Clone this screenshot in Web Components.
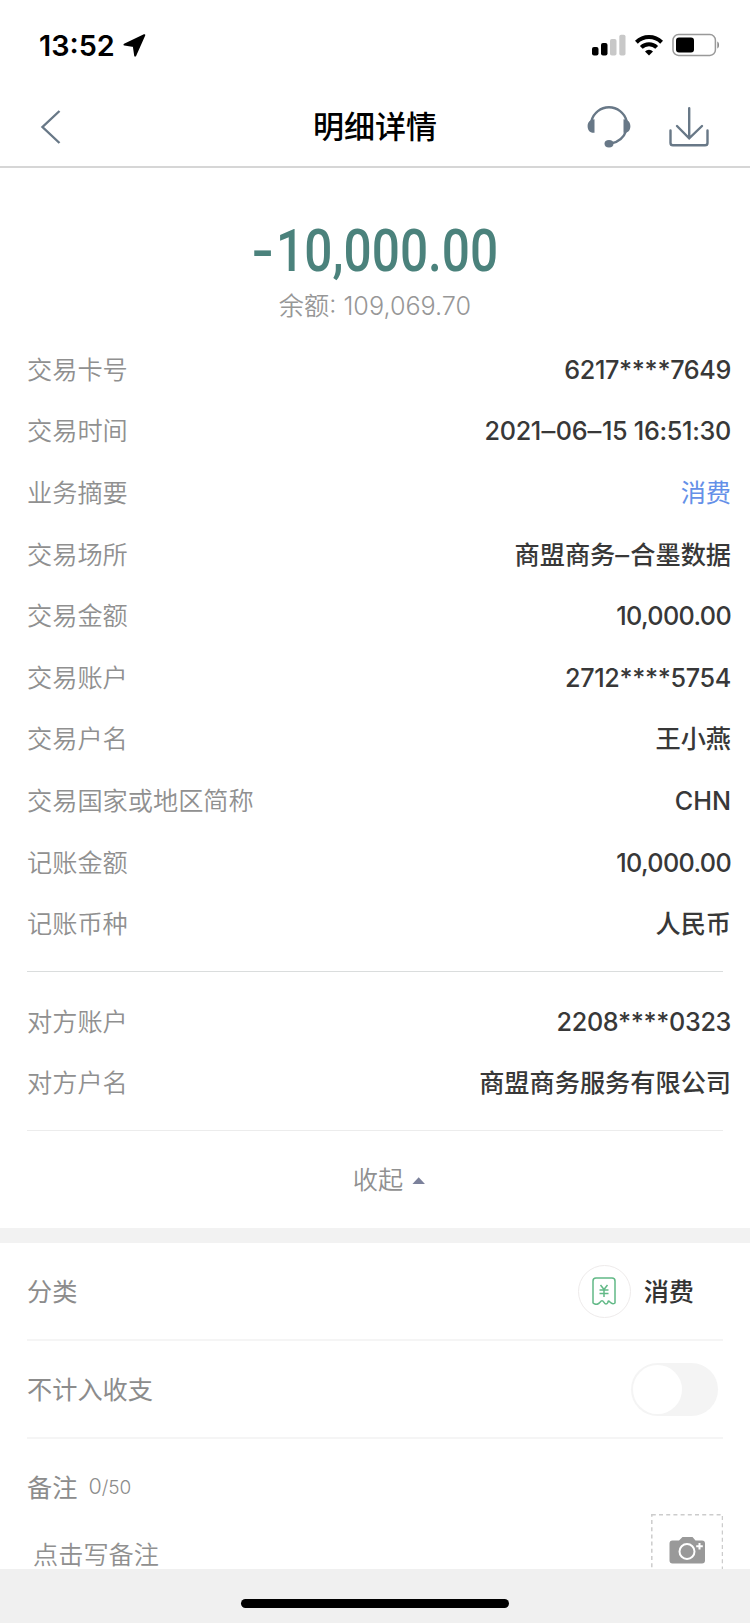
<!DOCTYPE html>
<html lang="zh-CN">
<head>
<meta charset="utf-8">
<title>明细详情</title>
<style>
  body {
    margin: 0;
    background: #fff;
    font-family: Inter, "Noto Sans CJK SC", sans-serif;
  }
  /* wide dashes in dates and names */
  detail-row span {
    display: inline-block;
    margin: 0 1.2px;
    transform: scaleX(1.1);
  }
  amount-summary span {
    display: inline-block;
    margin-right: 6px;
    transform: scaleX(1.3);
  }
</style>
</head>
<body>
<detail-page>
  <status-bar slot="top" time="13:52"></status-bar>
  <nav-bar slot="top">明细详情</nav-bar>

  <amount-summary balance="109,069.70"><span>-</span>10,000.00</amount-summary>

  <detail-group>
    <detail-row label="交易卡号" kind="account">6217****7649</detail-row>
    <detail-row label="交易时间" kind="time">2021<span>–</span>06<span>–</span>15 16:51:30</detail-row>
    <detail-row label="业务摘要" link>消费</detail-row>
    <detail-row label="交易场所">商盟商务<span>–</span>合墨数据</detail-row>
    <detail-row label="交易金额" kind="money">10,000.00</detail-row>
    <detail-row label="交易账户" kind="account">2712****5754</detail-row>
    <detail-row label="交易户名">王小燕</detail-row>
    <detail-row label="交易国家或地区简称">CHN</detail-row>
    <detail-row label="记账金额" kind="money">10,000.00</detail-row>
    <detail-row label="记账币种">人民币</detail-row>
  </detail-group>
  <detail-group class="peer">
    <detail-row label="对方账户" kind="account">2208****0323</detail-row>
    <detail-row label="对方户名">商盟商务服务有限公司</detail-row>
  </detail-group>
  <fold-button>收起</fold-button>

  <setting-row label="分类"><category-tag>消费</category-tag></setting-row>
  <setting-row label="不计入收支"><toggle-switch></toggle-switch></setting-row>
  <note-box label="备注" count="0" max="50">点击写备注</note-box>

  <home-bar slot="bottom"></home-bar>
</detail-page>

<script>
// attach an open shadow root filled from a template
function render(el, html) {
  const template = document.createElement("template");
  template.innerHTML = html;
  el.attachShadow({ mode: "open" });
  el.shadowRoot.appendChild(template.content.cloneNode(true));
}

// page frame: fixed height, the content is cut off by the home bar
class DetailPage extends HTMLElement {
  constructor() {
    super();
    render(this, `
      <style>
        :host { display: flex; flex-direction: column; width: 750px; height: 1623px; overflow: hidden; }
        main { flex: 1; min-height: 0; overflow: hidden; }
        ::slotted(.peer) { --pad-top: 19px; --line: #ececec; --pad-bottom: 16px; }
      </style>
      <slot name="top"></slot>
      <main><slot></slot></main>
      <slot name="bottom"></slot>`);
  }
}
customElements.define("detail-page", DetailPage);

class StatusBar extends HTMLElement {
  constructor() {
    super();
    render(this, `
      <style>
        :host { display: flex; align-items: center; justify-content: space-between;
          box-sizing: border-box; flex: none; height: 88px; padding: 2px 30px 0 39px; color: #000; }
        .left, .right { display: flex; align-items: center; }
        .left { gap: 8px; font-size: 28.8px; font-weight: 600; }
        .right { gap: 9px; }
        svg { display: block; }
      </style>
      <div class="left">
        <span></span>
        <svg width="23" height="23" viewBox="0 0 23 23">
          <path d="M21.3 1.2 1.5 10.6 10.8 12 12.2 21.5Z" stroke="#000" stroke-width="2" stroke-linejoin="round"/>
        </svg>
      </div>
      <div class="right">
        <svg width="34" height="22" viewBox="0 0 34 22">
          <rect x="0" y="13" width="6.5" height="8.5" rx="2"/>
          <rect x="9" y="9" width="6.5" height="12.5" rx="2"/>
          <rect x="18" y="5" width="6.5" height="16.5" rx="1.8" fill="#c8c8c8"/>
          <rect x="27.3" y="0.7" width="6.2" height="20.8" rx="1.8" fill="#c8c8c8"/>
        </svg>
        <svg width="28" height="22" viewBox="0 0 28 22" fill="none" stroke="#000" stroke-width="4">
          <path d="M1.4 8.2A18 18 0 0 1 26.6 8.2"/>
          <path d="M6.3 13.4A11 11 0 0 1 21.7 13.4"/>
          <path d="M14 21.4 10 17.4A5.7 5.7 0 0 1 18 17.4Z" fill="#000" stroke="none"/>
        </svg>
        <svg width="48" height="24" viewBox="0 0 48 24">
          <rect x="1" y="1.6" width="42.4" height="20.8" rx="5.5" fill="none" stroke="#999" stroke-width="1.5"/>
          <rect x="4" y="4.6" width="18" height="14.8" rx="3"/>
          <path d="M45.3 8.5C47.6 9.3 47.6 14.7 45.3 15.5Z" fill="#888"/>
        </svg>
      </div>`);
    this.shadowRoot.querySelector("span").textContent = this.getAttribute("time");
  }
}
customElements.define("status-bar", StatusBar);

class NavBar extends HTMLElement {
  constructor() {
    super();
    render(this, `
      <style>
        :host { display: grid; grid-template-columns: 1fr auto 1fr; align-items: center; flex: none;
          box-sizing: border-box; height: 80px; padding: 0 40px 1px; border-bottom: 2px solid #d6d6d6; }
        h1 { margin: 1px 0 0; font-size: 31px; font-weight: 500; color: #000; line-height: 40px; }
        .actions { display: flex; justify-content: flex-end; gap: 38px; margin-right: 1px; }
        svg { display: block; fill: none; stroke: #687887; stroke-width: 2.4; stroke-linecap: round; }
      </style>
      <svg width="22" height="36" viewBox="0 0 22 36"><path d="M19.5 2 2.5 18 19.5 34" stroke-linecap="butt"/></svg>
      <h1><slot></slot></h1>
      <div class="actions">
        <svg width="44" height="44" viewBox="0 1.2 44 44">
          <path d="M4.5 17A18 17.6 0 0 1 39.5 17M39.3 26.5C37 33.5 31.5 38.5 23 40"/>
          <path d="M7.5 15.500V29C3 29.500 .6 26.500 .6 22.500S3 15.700 7.500 15.500ZM36.500 15.500V29C41 29.500 43.400 26.500 43.400 22.500S41 15.700 36.500 15.500Z" fill="#687887" stroke="none"/>
          <ellipse cx="22" cy="40" rx="4.500" ry="3.700" fill="#687887" stroke="none"/>
        </svg>
        <svg width="40" height="42" viewBox="0 0 40 42">
          <path d="M1.5 25.5V38Q1.5 40.3 4 40.3H36Q38.5 40.3 38.5 38V25.5"/>
          <path d="M20.200 3.300V32M8 21 20.200 33.300 33 21"/>
        </svg>
      </div>`);
  }
}
customElements.define("nav-bar", NavBar);

class AmountSummary extends HTMLElement {
  constructor() {
    super();
    render(this, `
      <style>
        :host { display: flex; flex-direction: column; align-items: center; height: 171px; }
        .amount { margin: 47px 0 0 3px; height: 72px; line-height: 72px; font-family: Roboto, sans-serif;
          font-size: 59px; font-weight: 500; color: #4b827c; transform: scaleX(.84); white-space: nowrap; }
        .balance { margin-top: 3px; line-height: 32px; font-size: 25.2px; font-weight: 350; color: #979797; }
      </style>
      <div class="amount"><slot></slot></div>
      <div class="balance"></div>`);
    this.shadowRoot.querySelector(".balance").textContent = "余额: " + this.getAttribute("balance");
  }
}
customElements.define("amount-summary", AmountSummary);

class DetailGroup extends HTMLElement {
  constructor() {
    super();
    render(this, `
      <style>
        :host { display: block; margin: 0 19px 0 27px; padding-top: var(--pad-top, 0); }
        hr { margin: var(--pad-bottom, 16px) 8px 0 0; border: 0; height: 1px; background: var(--line, #dadddd); }
      </style>
      <slot></slot>
      <hr>`);
  }
}
customElements.define("detail-group", DetailGroup);

class DetailRow extends HTMLElement {
  constructor() {
    super();
    render(this, `
      <style>
        :host { display: flex; align-items: center; justify-content: space-between; height: 61.6px;
          font-size: 25.2px; line-height: 36px; }
        .label { font-weight: 350; color: #909090; }
        .value { font-weight: 500; color: #383838; }
        :host([link]) .value { font-weight: 400; color: #6490e8; }
        :host([kind=account]) .value { letter-spacing: -.35px; }
        :host([kind=time]) .value { letter-spacing: -.3px; }
        :host([kind=money]) .value { letter-spacing: -.65px; }
      </style>
      <span class="label"></span>
      <span class="value"><slot></slot></span>`);
    this.shadowRoot.querySelector(".label").textContent = this.getAttribute("label");
  }
}
customElements.define("detail-row", DetailRow);

class FoldButton extends HTMLElement {
  constructor() {
    super();
    render(this, `
      <style>
        :host { display: flex; align-items: center; justify-content: center; gap: 9px;
          box-sizing: border-box; height: 112px; padding: 0 0 3px 28px; border-bottom: 15px solid #f2f2f2;
          font-size: 25.2px; font-weight: 350; color: #909090; }
        i { width: 13px; height: 7px; margin-top: 5px; background: #7b819b; clip-path: polygon(50% 0, 100% 100%, 0 100%); }
      </style>
      <slot></slot><i></i>`);
  }
}
customElements.define("fold-button", FoldButton);

class SettingRow extends HTMLElement {
  constructor() {
    super();
    render(this, `
      <style>
        :host { display: flex; align-items: center; justify-content: space-between; box-sizing: border-box;
          height: 97.7px; margin: 0 27px; padding-top: 1px; border-bottom: 2px solid #f5f5f5; }
        span { margin-bottom: 2px; font-size: 25.2px; font-weight: 400; color: #8c8c8c; }
      </style>
      <span></span>
      <slot></slot>`);
    this.shadowRoot.querySelector("span").textContent = this.getAttribute("label");
  }
}
customElements.define("setting-row", SettingRow);

class CategoryTag extends HTMLElement {
  constructor() {
    super();
    render(this, `
      <style>
        :host { display: flex; align-items: center; gap: 13px; margin-right: 29px;
          font-size: 25.2px; font-weight: 500; color: #333; }
        .ring { display: flex; align-items: center; justify-content: center; box-sizing: border-box;
          width: 53px; height: 53px; border: 1.5px solid #eeebeb; border-radius: 50%; }
        .name { margin-bottom: 2px; }
        svg { fill: none; stroke: #62b987; stroke-width: 1.5; stroke-linejoin: round; }
      </style>
      <div class="ring">
        <svg width="24" height="28" viewBox="0 0 24 28">
          <path d="M1 26V4Q1 1 4 1H20Q23 1 23 4V26Q20.500 27.700 18.200 25.300T16 25.300Q14 28.500 12 25.300T8 25.300Q5 29 1 26Z"/>
          <path d="M8.500 8 12 12.500 15.500 8M12 12.500V20M7.500 13H16.500M7.500 16.500H16.500"/>
        </svg>
      </div>
      <div class="name"><slot></slot></div>`);
  }
}
customElements.define("category-tag", CategoryTag);

class ToggleSwitch extends HTMLElement {
  constructor() {
    super();
    render(this, `
      <style>
        :host { display: flex; box-sizing: border-box; width: 87px; height: 53px; margin-right: 5px;
          padding: 2px; border-radius: 27px; background: #f4f4f4; }
        i { width: 49px; height: 49px; border-radius: 50%; background: #fff; }
      </style>
      <i></i>`);
  }
}
customElements.define("toggle-switch", ToggleSwitch);

class NoteBox extends HTMLElement {
  constructor() {
    super();
    render(this, `
      <style>
        :host { display: flex; justify-content: space-between; margin: 0 27px; }
        .head { display: flex; align-items: center; gap: 11px; box-sizing: border-box; height: 97px;
          padding-bottom: 2px; font-size: 25.2px; color: #8c8c8c; }
        .count { font-size: 19px; font-weight: 300; }
        .count b { font-size: 21.5px; font-weight: 300; }
        .hint { margin: 1px 0 0 6px; line-height: 36px; font-size: 25.2px; font-weight: 350; color: #909090; }
        .photo { width: 72px; height: 72px; margin-top: 75px; }
      </style>
      <div>
        <div class="head"><span class="label"></span><span class="count"><b></b>/<span class="max"></span></span></div>
        <div class="hint"><slot></slot></div>
      </div>
      <svg class="photo" viewBox="0 0 72 72">
        <rect x=".8" y=".8" width="70.7" height="70.7" fill="none" stroke="#ccc" stroke-width="1.5" stroke-dasharray="4 3.2"/>
        <path d="M21.500 26.500H28L31.500 23H41.500L44.500 26.500H51Q54 26.500 54 29.500V46.500Q54 49.500 51 49.500H21.500Q18.500 49.500 18.500 46.500V29.500Q18.500 26.500 21.500 26.500Z" fill="#999"/>
        <circle cx="36" cy="37.5" r="7.5" fill="none" stroke="#fff" stroke-width="2"/>
        <path d="M48.500 29V35.500M45.200 32.200H51.800" stroke="#fff" stroke-width="2"/>
      </svg>`);
    this.shadowRoot.querySelector(".label").textContent = this.getAttribute("label");
    this.shadowRoot.querySelector("b").textContent = this.getAttribute("count");
    this.shadowRoot.querySelector(".max").textContent = this.getAttribute("max");
  }
}
customElements.define("note-box", NoteBox);

class HomeBar extends HTMLElement {
  constructor() {
    super();
    render(this, `
      <style>
        :host { display: flex; justify-content: center; align-items: flex-start; flex: none;
          box-sizing: border-box; height: 54px; padding-top: 30px; background: #f0f0f0; }
        i { width: 268px; height: 9px; border-radius: 5px; background: #000; }
      </style>
      <i></i>`);
  }
}
customElements.define("home-bar", HomeBar);
</script>
</body>
</html>
